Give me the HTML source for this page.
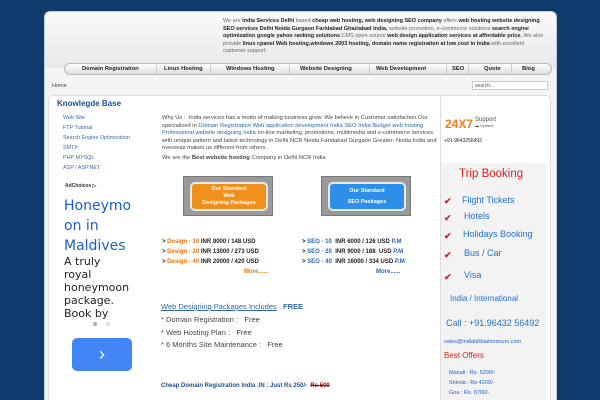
<!DOCTYPE html>
<html><head><style>
*{margin:0;padding:0;box-sizing:border-box}
html,body{width:600px;height:400px;overflow:hidden}
body{background:#0e3b6c;font-family:"Liberation Sans",Arial,sans-serif;position:relative}
.a{position:absolute}
.wrap{left:44px;top:11px;width:513px;height:395px;background:#f4f4f4;border-radius:6px;border:1px solid #c8ccd2}
.hdr{left:45px;top:12px;width:511px;height:56px;background:linear-gradient(#fafafa,#e8e8e8);border-radius:6px 6px 0 0}
.intro{left:223px;top:18px;width:322px;font-size:5.5px;line-height:7.6px;color:#666}
.intro b{color:#222}
.nav{left:64px;top:63px;width:488px;height:12px;background:linear-gradient(#fff,#dedede);border:1px solid #bbb;border-radius:6px;font-size:5.8px;font-weight:bold;color:#222}
.nav span{position:absolute;top:2px}
.nav i{position:absolute;top:0;width:1px;height:10px;background:#ccc}
.home{left:52px;top:83px;font-size:5.5px;color:#444}
.search{left:472px;top:81px;width:76px;height:9px;background:#fff;border:1px solid #ccc;font-size:5px;color:#555;padding:1px 2px}
.main{left:48px;top:95px;width:503px;height:310px;background:#fff;border-radius:5px;border:1px solid #ddd}
.kb{left:57px;top:99px;font-size:8px;font-weight:bold;color:#1c4f8c}
.kbl{left:63px;top:113px;font-size:5.4px;color:#3a67a8;line-height:10px}
.small{font-size:5.8px;line-height:7.5px;color:#444}
.bl{color:#2f64b0}
.btn{width:90px;height:40px;background:#9a9a9a;border:1px solid #777}
.btn div{position:absolute;left:6px;top:5px;width:78px;height:29px;border-radius:5px;border:2px solid #e9e9e9;color:#fff;font-size:5.5px;font-weight:bold;text-align:center}
.pk{font-size:6px;font-weight:bold;color:#222;line-height:10px}
.or{color:#e8740e}.bu{color:#2f64b0}
.rc{left:441px;top:163px;width:106px;height:237px;background:#f3f3f3}
.tb{color:#1f6fd0;font-size:9px;position:absolute}
.chk{position:absolute;color:#d0202a;font-size:9px;font-weight:bold}
</style></head><body>
<div class="a wrap"></div>
<div class="a hdr"></div>
<div class="a intro">We are <b>India Services Delhi</b> based <b>cheap web hosting, web designing SEO company</b> offers <b>web hosting website designing SEO services Delhi Noida Gurgaon Faridabad Ghaziabad India,</b> website promotion, e-commerce solutions <b>search engine optimization google yahoo ranking solutions</b> CMS open source <b>web design application services at affordable price.</b> We also provide <b>linux cpanel Web hosting,windows 2003 hosting, domain name registration at low cost in India</b> with excellent customer support.</div>
<div class="a nav">
<span style="left:17px">Domain Registration</span><i style="left:91px"></i>
<span style="left:99px">Linux Hosting</span><i style="left:145px"></i>
<span style="left:161px">Windows Hosting</span><i style="left:224px"></i>
<span style="left:235px">Website Designing</span><i style="left:304px"></i>
<span style="left:311px">Web Development</span><i style="left:381px"></i>
<span style="left:387px">SEO</span><i style="left:403px"></i>
<span style="left:419px">Quote</span><i style="left:446px"></i>
<span style="left:457px">Blog</span></div>
<div class="a home">Home</div>
<div class="a search">search...</div>
<div class="a main"></div>
<div class="a kb">Knowlegde Base</div>
<div class="a kbl">Web Site<br>FTP Tutorial<br>Search Engine Optimization<br>SMTP<br>PHP MYSQL<br>ASP / ASP.NET</div>
<div class="a" style="left:65px;top:183px;font-size:5px;font-weight:bold;color:#333">AdChoices ▷</div>
<div class="a" style="left:64px;top:196px;font-family:'DejaVu Sans',sans-serif;font-size:14px;line-height:20px;color:#1a5fc8">Honeymo<br>on in<br>Maldives</div>
<div class="a" style="left:64px;top:255px;font-family:'DejaVu Sans',sans-serif;font-size:11px;line-height:13px;color:#222">A truly<br>royal<br>honeymoon<br>package.<br>Book by</div>
<div class="a" style="left:93px;top:322px;width:4px;height:4px;border-radius:2px;background:#aaa"></div>
<div class="a" style="left:106px;top:322px;width:4px;height:4px;border-radius:2px;border:1px solid #ccc"></div>
<div class="a" style="left:72px;top:338px;width:60px;height:33px;border-radius:5px;background:#4285f4;color:#fff;font-size:18px;text-align:center;line-height:33px">›</div>
<div class="a small" style="left:162px;top:115px;width:276px">Why Us :&nbsp; India services has a motto of making business grow. We believe in Customer satisfaction.Our specialized in <span class="bl">Domain Registration Web application development India SEO India Budget web hosting Professional website designing India</span> on-line marketing, promotions, multimedia and e-commerce services with unique pattern and latest technology in Delhi NCR Noida Faridabad Gurgaon Greater- Noida India and overseas makes us different from others.</div>
<div class="a small" style="left:162px;top:155px">We are the <b>Best website hosting</b> Company in Delhi NCR India</div>
<div class="a btn" style="left:183px;top:176px"><div style="background:#f0901c;line-height:7px;padding-top:2px">Our Standard<br>Web<br>Designing Packages</div></div>
<div class="a btn" style="left:321px;top:176px"><div style="background:#2d8fe8;line-height:11px;padding-top:2px">Our Standard<br>SEO Packages</div></div>
<div class="a pk" style="left:162px;top:237px">&gt; <span class="or">Design - 10</span> INR 8000 / 148 USD<br>&gt; <span class="or">Design - 20</span> INR 13000 / 273 USD<br>&gt; <span class="or">Design - 40</span> INR 20000 / 420 USD<br><span class="or" style="margin-left:82px">More......</span></div>
<div class="a pk" style="left:302px;top:237px">&gt; <span class="bu">SEO - 10</span>&nbsp; INR 6000 / 126 USD <span class="bu">P.M</span><br>&gt; <span class="bu">SEO - 20</span>&nbsp; INR 9000 / 188&nbsp; USD <span class="bu">P.M</span><br>&gt; <span class="bu">SEO - 40</span>&nbsp; INR 16000 / 334 USD <span class="bu">P.M</span><br><span class="bu" style="margin-left:74px">More......</span></div>
<div class="a" style="left:161px;top:302px;font-size:7.5px;color:#2f64b0"><u>Web Designing Packages Includes</u> : <b>FREE</b></div>
<div class="a" style="left:161px;top:314px;font-size:7.5px;line-height:12.5px;color:#444">* Domain Registration :&nbsp;&nbsp; Free<br>* Web Hosting Plan :&nbsp;&nbsp; Free<br>* 6 Months Site Maintenance :&nbsp;&nbsp; Free</div>
<div class="a" style="left:161px;top:383px;font-size:6px;font-weight:bold;color:#1c4f8c">Cheap Domain Registration India .IN : Just Rs 250/-&nbsp; <s style="color:#a00">Rs 500</s></div>
<div class="a" style="left:440px;top:96px;width:1px;height:304px;background:#ddd"></div>
<div class="a" style="left:445px;top:117px;font-size:12px;font-weight:bold;color:#f07f0e">24X7</div>
<div class="a" style="left:475px;top:117px;font-size:6px;color:#555;line-height:6px">Support<br><span style="font-size:4px">▬ System</span></div>
<div class="a" style="left:444px;top:138px;font-size:5px;color:#222">+91-9643256492</div>
<div class="a rc"></div>
<div class="a" style="left:459px;top:168px;font-size:11.5px;color:#d8201e">Trip Booking</div>
<div class="chk" style="left:444px;top:196px">✔</div><div class="tb" style="left:462px;top:195px">Flight Tickets</div>
<div class="chk" style="left:444px;top:213px">✔</div><div class="tb" style="left:464px;top:211px">Hotels</div>
<div class="chk" style="left:444px;top:231px">✔</div><div class="tb" style="left:463px;top:229px">Holidays Booking</div>
<div class="chk" style="left:444px;top:250px">✔</div><div class="tb" style="left:464px;top:248px">Bus / Car</div>
<div class="chk" style="left:444px;top:272px">✔</div><div class="tb" style="left:464px;top:270px">Visa</div>
<div class="tb" style="left:450px;top:294px;font-size:8px">India / International</div>
<div class="tb" style="left:446px;top:318px;font-size:9px">Call : +91.96432 56492</div>
<div class="a" style="left:444px;top:339px;font-size:5.5px;color:#1f5fc0">sales@indiahillstationtours.com</div>
<div class="a" style="left:444px;top:351px;font-size:8px;color:#d8201e">Best Offers</div>
<div class="a" style="left:449px;top:368px;font-size:5.5px;line-height:10px;color:#1f5fc0">Manali : Rs. 5200/-<br>Shimla : Rs 4200/-<br>Goa : Rs. 8700/-</div>
</body></html>
